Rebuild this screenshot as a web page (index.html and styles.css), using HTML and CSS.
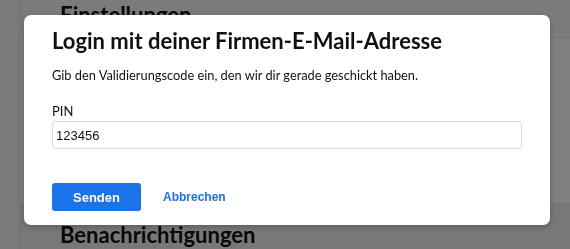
FILE: index.html
```html
<!DOCTYPE html>
<html lang="de">
<head>
    <meta charset="UTF-8">
    <meta name="viewport" content="width=device-width, initial-scale=1.0">
    <title>Einstellungen</title>
    <link rel="stylesheet" href="styles.css">
</head>
<body>
    <div class="page">
        <div class="sidebar"></div>
        <div class="main">
            <div class="main-header">
                <h2>Einstellungen</h2>
            </div>
            <div class="main-body"></div>
            <div class="main-section">
                <h2>Benachrichtigungen</h2>
            </div>
        </div>
    </div>
    <div class="overlay">
        <div class="modal">
            <h1>Login mit deiner Firmen-E-Mail-Adresse</h1>
            <p>Gib den Validierungscode ein, den wir dir gerade geschickt haben.</p>
            <label class="field-label" for="pin">PIN</label>
            <input id="pin" class="field-input" type="text" value="123456">
            <div class="buttons">
                <button class="btn-primary">Senden</button>
                <button class="btn-link">Abbrechen</button>
            </div>
        </div>
    </div>
</body>
</html>
```

FILE: styles.css
```css
body {
    margin: 0;
    padding: 0;
    font-family: 'Lato', 'Noto Sans', sans-serif;
    background-color: #ffffff;
    color: #111;
    overflow: hidden;
}
.page {
    display: flex;
    height: 249px;
}
.sidebar {
    width: 19px;
    background-color: #f4f4f4;
    border-right: 1px solid #e2e2e2;
}
.main {
    flex: 1;
    display: flex;
    flex-direction: column;
}
.main-header {
    height: 37px;
    padding-left: 40px;
    background-color: #f7f7f7;
    border-bottom: 1px solid #ececec;
}
.main-header h2,
.main-section h2 {
    margin: 0;
    font-size: 22px;
    font-weight: 700;
}
.main-header h2 {
    padding-top: 1px;
}
.main-body {
    height: 165px;
}
.main-section {
    flex: 1;
    padding-left: 40px;
    padding-top: 17px;
    background-color: #f1f1f1;
    border-top: 1px solid #e6e6e6;
}
.overlay {
    position: fixed;
    inset: 0;
    background-color: rgba(0, 0, 0, 0.5);
}
.modal {
    position: absolute;
    left: 24px;
    top: 15px;
    width: 470px;
    height: 210px;
    padding: 0 28px;
    background: #fff;
    border-radius: 7px;
    box-shadow: 0 2px 6px rgba(0,0,0,0.25);
}
.modal h1 {
    margin: 12px 0 0;
    font-size: 22px;
    font-weight: 700;
    line-height: 28px;
}
.modal p {
    margin: 11px 0 0;
    font-size: 12.8px;
    line-height: 18px;
}
.field-label {
    display: block;
    margin-top: 18px;
    font-size: 13px;
    line-height: 18px;
}
.field-input {
    display: block;
    box-sizing: border-box;
    width: 100%;
    height: 28px;
    margin-top: 1px;
    padding: 0 3px;
    border: 1px solid #dcdcdc;
    border-radius: 3px;
    font-family: 'Liberation Sans', Arial, sans-serif;
    font-size: 13px;
    color: #111;
}
.buttons {
    display: flex;
    align-items: center;
    gap: 22px;
    margin-top: 34px;
}
.btn-primary {
    width: 89px;
    height: 28px;
    border: none;
    border-radius: 3px;
    background-color: #1a73e8;
    color: #fff;
    font-family: 'Liberation Sans', Arial, sans-serif;
    font-size: 13px;
    font-weight: 700;
    cursor: pointer;
}
.btn-link {
    padding: 0;
    border: none;
    background: none;
    color: #1a73e8;
    font-family: 'Liberation Sans', Arial, sans-serif;
    font-size: 12px;
    font-weight: 700;
    cursor: pointer;
}
```
